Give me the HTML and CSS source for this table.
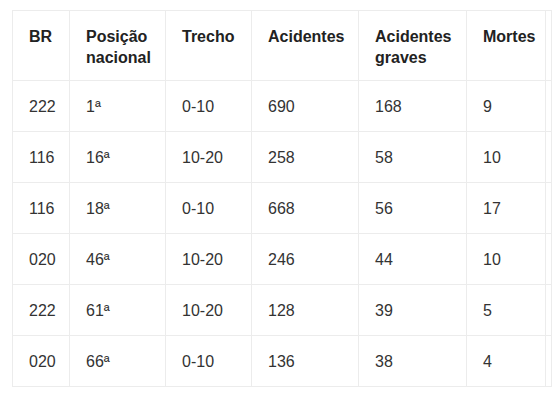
FILE: index.html
```html
<!DOCTYPE html>
<html lang="pt">
<head>
<meta charset="utf-8">
<link rel="stylesheet" href="styles.css">
</head>
<body>
<table class="data">
  <colgroup>
    <col class="c1"><col class="c2"><col class="c3"><col class="c4"><col class="c5"><col class="c6"><col class="c7">
  </colgroup>
  <thead>
    <tr><th>BR</th><th>Posição nacional</th><th>Trecho</th><th>Acidentes</th><th>Acidentes graves</th><th>Mortes</th><th class="pad"></th></tr>
  </thead>
  <tbody>
    <tr><td>222</td><td>1ª</td><td>0-10</td><td>690</td><td>168</td><td>9</td><td class="pad"></td></tr>
    <tr><td>116</td><td>16ª</td><td>10-20</td><td>258</td><td>58</td><td>10</td><td class="pad"></td></tr>
    <tr><td>116</td><td>18ª</td><td>0-10</td><td>668</td><td>56</td><td>17</td><td class="pad"></td></tr>
    <tr><td>020</td><td>46ª</td><td>10-20</td><td>246</td><td>44</td><td>10</td><td class="pad"></td></tr>
    <tr><td>222</td><td>61ª</td><td>10-20</td><td>128</td><td>39</td><td>5</td><td class="pad"></td></tr>
    <tr><td>020</td><td>66ª</td><td>0-10</td><td>136</td><td>38</td><td>4</td><td class="pad"></td></tr>
  </tbody>
</table>
</body>
</html>
```
FILE: styles.css
```css
html, body {
  margin: 0;
  padding: 0;
  background: #ffffff;
}
body {
  padding: 10px 0 0 12px;
  font-family: "Liberation Sans", Arial, sans-serif;
  font-size: 16px;
  color: #333333;
}
.data {
  border-collapse: collapse;
  table-layout: fixed;
  width: 539px;
}
.c1 { width: 57px; }
.c2 { width: 96px; }
.c3 { width: 86px; }
.c4 { width: 107px; }
.c5 { width: 108px; }
.c6 { width: 79px; }
.c7 { width: 6px; }
.data th,
.data td {
  border: 1px solid #ececec;
  text-align: left;
  line-height: 21px;
  padding: 15px 8px 14px 16px;
}
.data th {
  font-weight: bold;
  color: #222222;
  vertical-align: top;
  padding-bottom: 12px;
}
.data td {
  vertical-align: middle;
}
.data .pad {
  padding: 0;
}
```
